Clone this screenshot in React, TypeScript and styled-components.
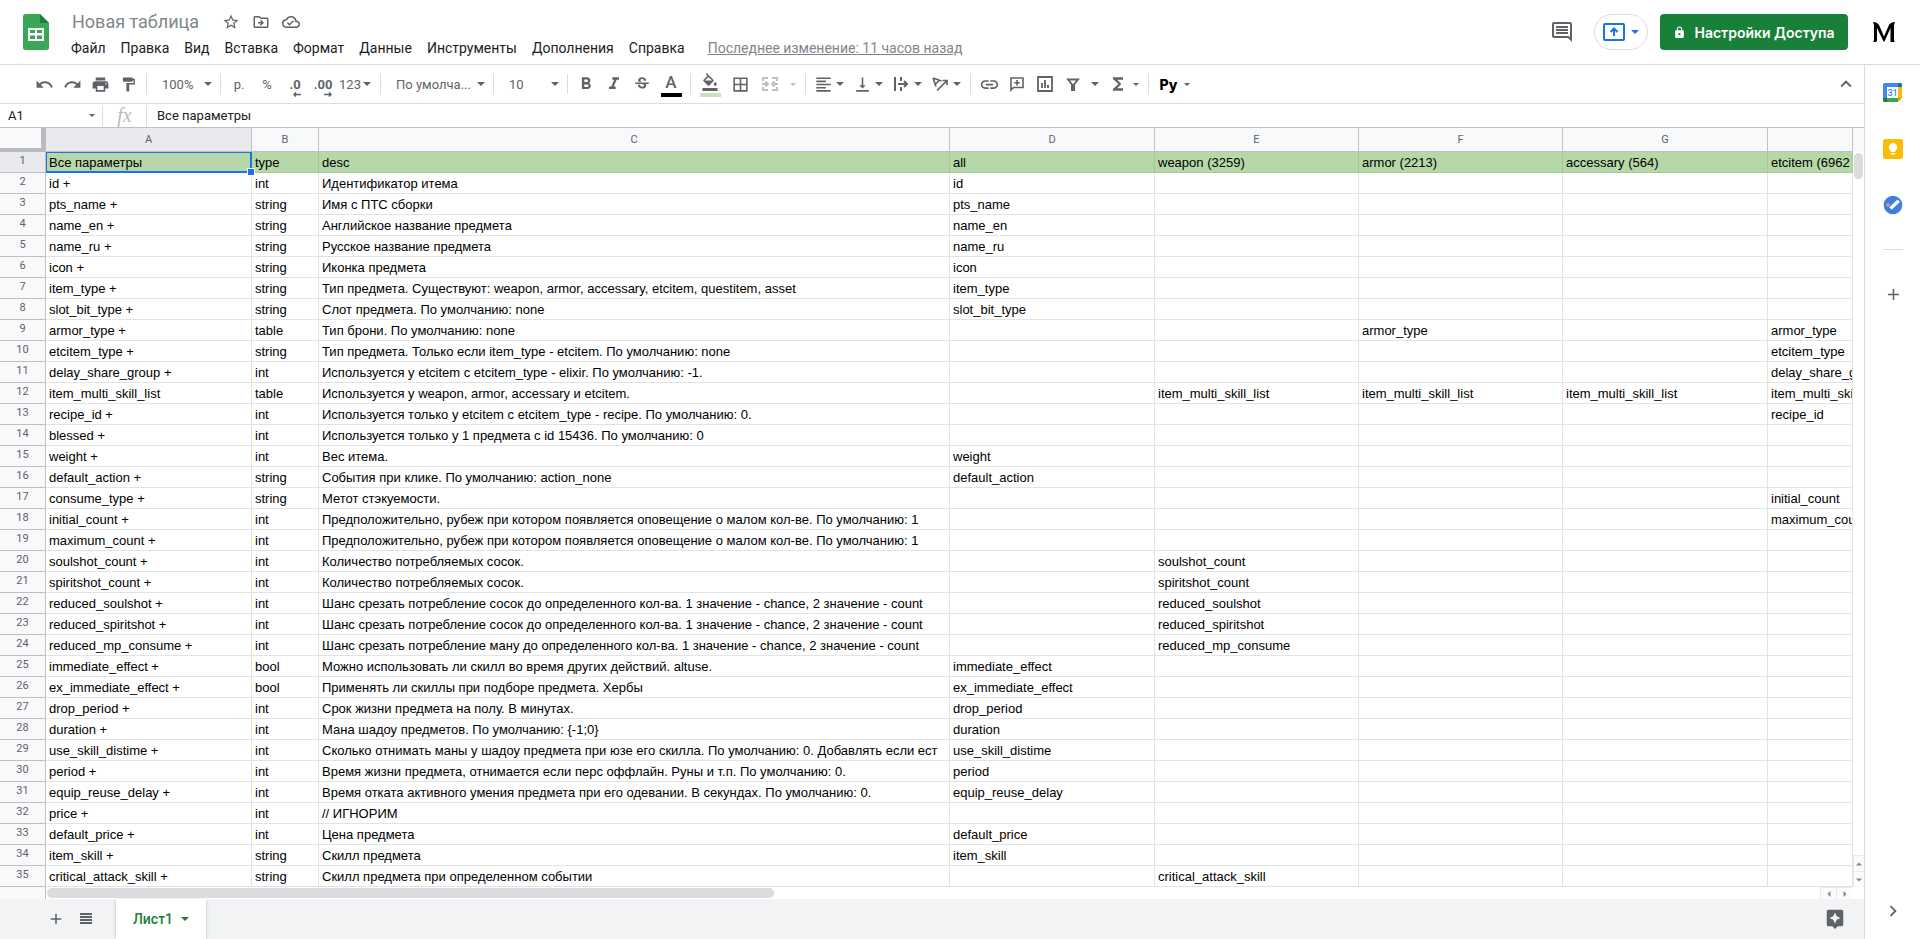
import React from "react";
import styled, { createGlobalStyle } from "styled-components";
import {
  MdAdd,
  MdAssistant,
  MdBorderAll,
  MdChevronRight,
  MdFormatAlignLeft,
  MdFormatBold,
  MdFormatColorFill,
  MdFormatItalic,
  MdFormatPaint,
  MdFunctions,
  MdKeyboardArrowUp,
  MdLink,
  MdLock,
  MdOutlineCloudDone,
  MdOutlineComment,
  MdOutlineDriveFileMove,
  MdPrint,
  MdRedo,
  MdStarBorder,
  MdStrikethroughS,
  MdUndo,
  MdVerticalAlignBottom,
} from "react-icons/md";

const GlobalStyle = createGlobalStyle`
  *, *::before, *::after { box-sizing: border-box; }
  body {
    margin: 0;
    background: #fff;
    color: #202124;
    font-family: Roboto, "Liberation Sans", sans-serif;
  }
  button, input, select { font: inherit; color: inherit; margin: 0; }
`;

const line = "#dadce0";
const iconGrey = "#5f6368";

/* ---------- page ---------- */

const Page = styled.div`
  display: flex;
  flex-direction: column;
  min-height: 100vh;
  overflow: hidden;
`;

const Body = styled.div`
  display: flex;
  flex: 1;
`;

const Main = styled.main`
  display: flex;
  flex-direction: column;
  flex: 1;
  min-width: 0;
`;

const PlainButton = styled.button`
  display: flex;
  align-items: center;
  justify-content: center;
  padding: 0;
  border: 0;
  background: none;
  color: ${iconGrey};
  white-space: nowrap;
  cursor: pointer;
`;

/* ---------- header ---------- */

const Header = styled.header`
  display: flex;
  align-items: flex-start;
  height: 65px;
  padding-left: 23px;
  border-bottom: 1px solid ${line};
`;

const LogoLink = styled.a`
  display: block;
  width: 26px;
  height: 36px;
  margin-top: 14px;
`;

const DocInfo = styled.div`
  padding: 10px 0 0 14px;
`;

const TitleRow = styled.div`
  display: flex;
  align-items: center;
  height: 24px;
  padding-left: 9px;
`;

const TitleInput = styled.input`
  width: 144px;
  padding: 0;
  border: 0;
  outline: 0;
  background: none;
  font-size: 18px;
  line-height: 22px;
  color: #80868b;
`;

const TitleButton = styled(PlainButton)`
  width: 30px;
  height: 24px;
`;

const MenuBar = styled.nav`
  display: flex;
  align-items: center;
  height: 28px;
`;

const MenuItem = styled(PlainButton)`
  height: 24px;
  padding: 0 7px 0 8px;
  font-size: 14px;
  color: #202124;
`;

const LastEdit = styled.a`
  margin-left: 16px;
  font-size: 14px;
  line-height: 24px;
  color: #80868b;
  white-space: nowrap;
`;

const HeaderActions = styled.div`
  display: flex;
  align-items: center;
  height: 36px;
  margin: 14px 24px 0 auto;
`;

const CommentButton = styled(PlainButton)`
  width: 40px;
  height: 36px;
`;

const PresentButton = styled(PlainButton)`
  width: 54px;
  height: 36px;
  gap: 6px;
  margin: 0 12px;
  border: 1px solid ${line};
  border-radius: 18px;
  color: #1a73e8;
`;

const ShareButton = styled(PlainButton)`
  width: 188px;
  height: 36px;
  gap: 8px;
  border-radius: 4px;
  background: #188038;
  color: #fff;
  font-family: Inter, Roboto, sans-serif;
  font-size: 14px;
  font-weight: 600;
`;

const AvatarLink = styled.a`
  display: block;
  width: 24px;
  height: 24px;
  margin-left: 24px;
`;

/* ---------- toolbar ---------- */

const ToolbarRow = styled.div`
  display: flex;
  align-items: center;
  height: 39px;
  padding: 0 5px 0 30px;
  border-bottom: 1px solid ${line};
  font-size: 13px;
  color: ${iconGrey};
`;

const Tool = styled(PlainButton)<{ $w?: number; $split?: boolean; $faded?: boolean }>`
  flex: none;
  width: ${(p) => p.$w ?? 28}px;
  height: 28px;
  padding-right: ${(p) => (p.$split ? 5 : 0)}px;
  color: ${(p) => (p.$faded ? "#bdc1c6" : iconGrey)};
`;

const ToolIcon = styled.span`
  display: flex;
  flex: 1;
  justify-content: center;
`;

const ToolDivider = styled.span`
  flex: none;
  width: 1px;
  height: 20px;
  margin: 0 4px;
  background: ${line};
`;

const SelectBox = styled.label<{ $w: number }>`
  display: flex;
  flex: none;
  align-items: center;
  width: ${(p) => p.$w}px;
  height: 28px;
  padding: 0 4px 0 11px;
`;

const ToolSelect = styled.select`
  flex: 1;
  min-width: 0;
  padding: 0;
  border: 0;
  outline: 0;
  background: none;
  appearance: none;
  color: ${iconGrey};
`;

const UnderBar = styled.span<{ $color: string }>`
  display: flex;
  justify-content: center;
  width: 21px;
  height: 24px;
  border-bottom: 4px solid ${(p) => p.$color};
  margin-top: 2px;
  font-size: 17px;
  line-height: 18px;
  font-weight: 500;
`;

const DecimalLabel = styled.span`
  display: flex;
  flex-direction: column;
  align-items: flex-end;
  padding-top: 6px;
  font-size: 13px;
  font-weight: 700;
  line-height: 14px;
`;

const ScriptLabel = styled.span`
  font-family: Inter, sans-serif;
  font-size: 14px;
  font-weight: 800;
  color: #000;
`;

const CollapseButton = styled(Tool)`
  margin-left: auto;
  margin-right: -1px;
`;

/* ---------- formula bar ---------- */

const FormulaRow = styled.div`
  display: flex;
  align-items: center;
  height: 24px;
  border-bottom: 1px solid #c0c0c0;
  font-size: 13px;
`;

const NameBox = styled.label`
  display: flex;
  align-items: center;
  width: 103px;
  height: 20px;
  padding: 0 7px 0 8px;
  border-right: 1px solid ${line};
  color: ${iconGrey};
`;

const BarInput = styled.input`
  flex: 1;
  min-width: 0;
  padding: 0;
  border: 0;
  outline: 0;
  background: none;
  color: #202124;
`;

const FxLabel = styled.span`
  width: 44px;
  height: 20px;
  border-right: 1px solid ${line};
  font: italic 20px/18px "Liberation Serif", serif;
  color: #b8bbbe;
  text-align: center;
`;

const FormulaLabel = styled.label`
  display: flex;
  flex: 1;
  padding-left: 10px;
`;

/* ---------- sheet ---------- */

const SheetArea = styled.div`
  display: grid;
  grid-template-columns: minmax(0, 1fr) 11px;
  grid-template-rows: auto 12px;
`;

const TableClip = styled.div`
  overflow: hidden;
`;

const Table = styled.table`
  width: 100%;
  table-layout: fixed;
  border-collapse: separate;
  border-spacing: 0;
`;

const Col = styled.col<{ $w?: number }>`
  width: ${(p) => (p.$w ? `${p.$w}px` : "auto")};
`;

const ColHead = styled.th<{ $active?: boolean }>`
  height: 24px;
  padding: 0;
  border-right: 1px solid #c0c0c0;
  border-bottom: 1px solid #c0c0c0;
  background: ${(p) => (p.$active ? "#e8eaed" : "#f8f9fa")};
  font-size: 11px;
  font-weight: 400;
  color: ${iconGrey};
`;

const Corner = styled.td`
  padding: 0;
  border-right: 5px solid #b9bbbd;
  border-bottom: 4px solid #b9bbbd;
  background: #f8f9fa;
`;

const RowHead = styled.th<{ $active?: boolean }>`
  height: 21px;
  padding: 0 0 2px;
  border-right: 1px solid #c0c0c0;
  border-bottom: 1px solid #c0c0c0;
  background: ${(p) => (p.$active ? "#e8eaed" : "#f8f9fa")};
  font-size: 11px;
  line-height: 16px;
  font-weight: 400;
  color: ${iconGrey};
`;

const Cell = styled.td<{ $head?: boolean; $selected?: boolean }>`
  position: relative;
  height: 21px;
  padding: 2px 0 0 3px;
  border-right: 1px solid ${(p) => (p.$head ? "#a9c89c" : "#e2e3e3")};
  border-bottom: 1px solid ${(p) => (p.$head ? "#a9c89c" : "#e2e3e3")};
  background: ${(p) => (p.$head ? "#b6d7a8" : "#fff")};
  font-family: "Liberation Sans", Arial, sans-serif;
  font-size: 13px;
  line-height: 18px;
  color: #000;
  white-space: nowrap;
  overflow: ${(p) => (p.$selected ? "visible" : "hidden")};
  ${(p) => p.$selected && "box-shadow: inset 0 0 0 1px #1a73e8; border-color: #1a73e8; z-index: 1;"}
`;

const FillHandle = styled.span`
  position: absolute;
  right: -4px;
  bottom: -4px;
  width: 8px;
  height: 8px;
  border: 1px solid #fff;
  background: #1a73e8;
`;

const VScroll = styled.div`
  display: flex;
  flex-direction: column;
  padding-top: 25px;
  background: linear-gradient(#f8f9fa 24px, #fff 24px);
`;

const VThumb = styled.div`
  width: 9px;
  height: 26px;
  margin: 0 auto auto 1px;
  border-radius: 5px;
  background: ${line};
`;

const ScrollButton = styled(PlainButton)<{ $w: number; $h: number }>`
  flex: none;
  width: ${(p) => p.$w}px;
  height: ${(p) => p.$h}px;
  border: solid #e8eaed;
  border-width: 1px 0 0 1px;
  background: #fbfbfb;
`;

const HScroll = styled.div`
  display: flex;
  height: 12px;
  grid-column: 1 / 3;
  padding-right: 12px;
`;

const HScrollGutter = styled.div`
  width: 46px;
  border-right: 1px solid #c0c0c0;
  background: #f8f9fa;
`;

const HTrack = styled.div`
  flex: 1;
  padding: 1px 0 1px 1px;
`;

const HThumb = styled.div`
  width: 41%;
  height: 10px;
  border-radius: 5px;
  background: ${line};
`;

/* ---------- sheet tabs ---------- */

const TabsBar = styled.footer`
  display: flex;
  align-items: center;
  flex: 1;
  min-height: 40px;
  padding: 0 14px 0 41px;
  background: #f1f3f4;
`;

const BarButton = styled(PlainButton)`
  width: 30px;
  height: 38px;
`;

const SheetTab = styled(PlainButton)`
  align-self: stretch;
  width: 90px;
  gap: 8px;
  margin-left: 15px;
  background: #fff;
  box-shadow: 0 1px 3px rgba(60, 64, 67, 0.3);
  font-size: 14px;
  font-weight: 500;
  color: #188038;
`;

const ExploreButton = styled(BarButton)`
  margin-left: auto;
`;

/* ---------- side panel ---------- */

const Side = styled.aside`
  display: flex;
  flex-direction: column;
  flex: none;
  width: 56px;
  border-left: 1px solid ${line};
  padding-left: 1px;
`;

const SideButton = styled(PlainButton)<{ $last?: boolean }>`
  height: 56px;
  margin-top: ${(p) => (p.$last ? "auto" : 0)};
`;

const SideDivider = styled.hr`
  width: 20px;
  margin: 16px auto;
  border: 0;
  border-top: 1px solid ${line};
`;

/* ---------- drawings ---------- */

const Arrow = ({ small }: { small?: boolean }) => (
  <svg width={small ? 6 : 8} height={small ? 3 : 4} viewBox="0 0 8 4" fill="currentColor" aria-hidden>
    <path d="M0 0h8L4 4z" />
  </svg>
);

const Pointer = ({ d }: { d: string }) => (
  <svg width="6" height="6" viewBox="0 0 6 6" fill="#80868b" aria-hidden>
    <path d={d} />
  </svg>
);

const SheetsLogo = () => (
  <svg width="26" height="36" viewBox="0 0 26 36" aria-hidden>
    <path fill="#3aa757" d="M2.500 0H17l9 9v24.500a2.500 2.500 0 0 1-2.500 2.500h-21A2.500 2.500 0 0 1 0 33.500v-31A2.500 2.500 0 0 1 2.500 0z" />
    <path fill="#188038" d="M17 0l9 9h-9z" />
    <path fill="#fff" fillRule="evenodd" d="M5 14h16v13H5zM7 16v3h5v-3zM14 16v3h5v-3zM7 21.500v3.500h5v-3.500zM14 21.500v3.500h5v-3.500z" />
  </svg>
);

const PresentIcon = () => (
  <svg width="22" height="18" viewBox="0 0 22 18" fill="none" stroke="currentColor" strokeWidth="2" aria-hidden>
    <rect x="1" y="1" width="20" height="16" rx="1" />
    <path d="M11 13V6M7.500 9L11 5.500 14.500 9" />
  </svg>
);

const Avatar = () => (
  <svg width="24" height="24" viewBox="0 0 24 24" aria-hidden>
    <path d="M1 2c3.500.2 5.500 1.500 6.500 4L12 16.500 16.500 6C17.500 3.500 19.500 2.200 23 2l-1 3v14.500c0 1 .3 2 1 2.500h-4.500V8L12.500 21.500h-1L5 8v11c0 1.500-.3 2.500-1 3H1c.7-.5 1-1.500 1-2.500V5z" />
  </svg>
);

const MergeIcon = () => (
  <svg width="18" height="18" viewBox="0 0 18 18" fill="none" stroke="currentColor" strokeWidth="2" aria-hidden>
    <path d="M7 3H2v3M11 3h5v3M7 15H2v-3M11 15h5v-3M1 9h5M17 9h-5M4.500 6.500L7 9l-2.500 2.500M13.500 6.500L11 9l2.500 2.500" />
  </svg>
);

const WrapIcon = () => (
  <svg width="16" height="16" viewBox="0 0 16 16" fill="none" stroke="currentColor" strokeWidth="2" aria-hidden>
    <path d="M2 1v14M8 1v4M8 11v4M5 8h9M11 5l3 3-3 3" />
  </svg>
);

const RotateIcon = () => (
  <svg width="18" height="16" viewBox="0 0 18 16" fill="none" stroke="currentColor" strokeWidth="1.700" aria-hidden>
    <path d="M2 2l8.500 3M2 2l3 8.500M8.200 4.500L4.500 8M6 14.500L15.500 5M11.500 4.500H16V9" />
  </svg>
);

const AddCommentIcon = () => (
  <svg width="16" height="16" viewBox="0 0 16 16" fill="none" stroke="currentColor" strokeWidth="1.600" aria-hidden>
    <path d="M2 2h12v9.500H4.500L2 14zM8 4v5.500M5.200 6.700h5.600" />
  </svg>
);

const ChartIcon = () => (
  <svg width="16" height="16" viewBox="0 0 16 16" fill="none" stroke="currentColor" strokeWidth="1.800" aria-hidden>
    <path d="M1 1h14v14H1zM5 7v5M8 4v8M11 9v3" />
  </svg>
);

const FilterIcon = () => (
  <svg width="14" height="14" viewBox="0 0 14 14" fill="none" stroke="currentColor" strokeWidth="2" aria-hidden>
    <path d="M2 2.500h10L8 7.500V13H6V7.500z" />
  </svg>
);

const ShortArrow = ({ flip }: { flip?: boolean }) => (
  <svg width="8" height="5" viewBox="0 0 8 5" fill="none" stroke="currentColor" strokeWidth="1.500" aria-hidden>
    <path d={flip ? "M0 2.500h7M5 .5l2 2-2 2" : "M8 2.500H1M3 .5l-2 2 2 2"} />
  </svg>
);

const ListIcon = () => (
  <svg width="12" height="12" viewBox="0 0 12 12" fill="currentColor" aria-hidden>
    <path d="M0 0h12v2H0zM0 3h12v2H0zM0 6h12v2H0zM0 9h12v2H0z" />
  </svg>
);

const CalendarIcon = () => (
  <svg width="20" height="20" viewBox="0 0 20 20" aria-hidden>
    <path fill="#4285f4" d="M2 0h13v4H4v11H0V2a2 2 0 0 1 2-2z" />
    <path fill="#1967d2" d="M15 0h2.500A1.500 1.500 0 0 1 19 1.500V4h-4z" />
    <path fill="#fbbc04" d="M15 4h4v11h-4z" />
    <path fill="#34a853" d="M4 15h11v4H4z" />
    <path fill="#188038" d="M0 15h4v4H1.500A1.500 1.500 0 0 1 0 17.500z" />
    <path fill="#f29900" d="M15 15h4l-4 4z" />
    <path fill="#fff" d="M4 4h11v11H4z" />
    <text x="9.500" y="12.500" fontFamily="Roboto, sans-serif" fontSize="9" fontWeight="500" fill="#4285f4" textAnchor="middle">31</text>
  </svg>
);

const KeepIcon = () => (
  <svg width="20" height="20" viewBox="0 0 20 20" aria-hidden>
    <rect width="20" height="20" rx="2.500" fill="#fbbc04" />
    <path fill="#fff" d="M10 4a4.200 4.200 0 0 0-2.300 7.700V13h4.600v-1.300A4.200 4.200 0 0 0 10 4zM7.800 14h4.400v1.500H7.800z" />
  </svg>
);

const TasksIcon = () => (
  <svg width="20" height="20" viewBox="0 0 20 20" aria-hidden>
    <circle cx="10" cy="10" r="9.300" fill="#3f7de0" />
    <circle cx="5" cy="10" r="1.900" fill="#c9a063" />
    <path d="M7.500 13.500L15.700 5.800" stroke="#fff" strokeWidth="3.400" />
  </svg>
);

/* ---------- data ---------- */

const menus = ["Файл", "Правка", "Вид", "Вставка", "Формат", "Данные", "Инструменты", "Дополнения", "Справка"];

const columns: { name: string; width?: number }[] = [
  { name: "A", width: 206 },
  { name: "B", width: 67 },
  { name: "C", width: 631 },
  { name: "D", width: 205 },
  { name: "E", width: 204 },
  { name: "F", width: 204 },
  { name: "G", width: 205 },
  { name: "" },
];

const multi = "item_multi_skill_list";

const rows: string[][] = [
  ["Все параметры", "type", "desc", "all", "weapon (3259)", "armor (2213)", "accessary (564)", "etcitem (6962"],
  ["id +", "int", "Идентификатор итема", "id"],
  ["pts_name +", "string", "Имя с ПТС сборки", "pts_name"],
  ["name_en +", "string", "Английское название предмета", "name_en"],
  ["name_ru +", "string", "Русское название предмета", "name_ru"],
  ["icon +", "string", "Иконка предмета", "icon"],
  ["item_type +", "string", "Тип предмета. Существуют: weapon, armor, accessary, etcitem, questitem, asset", "item_type"],
  ["slot_bit_type +", "string", "Слот предмета. По умолчанию: none", "slot_bit_type"],
  ["armor_type +", "table", "Тип брони. По умолчанию: none", "", "", "armor_type", "", "armor_type"],
  ["etcitem_type +", "string", "Тип предмета. Только если item_type - etcitem. По умолчанию: none", "", "", "", "", "etcitem_type"],
  ["delay_share_group +", "int", "Используется у etcitem с etcitem_type - elixir. По умолчанию: -1.", "", "", "", "", "delay_share_group"],
  ["item_multi_skill_list", "table", "Используется у weapon, armor, accessary и etcitem.", "", multi, multi, multi, multi],
  ["recipe_id +", "int", "Используется только у etcitem с etcitem_type - recipe. По умолчанию: 0.", "", "", "", "", "recipe_id"],
  ["blessed +", "int", "Используется только у 1 предмета с id 15436. По умолчанию: 0"],
  ["weight +", "int", "Вес итема.", "weight"],
  ["default_action +", "string", "События при клике. По умолчанию: action_none", "default_action"],
  ["consume_type +", "string", "Метот стэкуемости.", "", "", "", "", "initial_count"],
  ["initial_count +", "int", "Предположительно, рубеж при котором появляется оповещение о малом кол-ве. По умолчанию: 1", "", "", "", "", "maximum_count"],
  ["maximum_count +", "int", "Предположительно, рубеж при котором появляется оповещение о малом кол-ве. По умолчанию: 1"],
  ["soulshot_count +", "int", "Количество потребляемых сосок.", "", "soulshot_count"],
  ["spiritshot_count +", "int", "Количество потребляемых сосок.", "", "spiritshot_count"],
  ["reduced_soulshot +", "int", "Шанс срезать потребление сосок до определенного кол-ва. 1 значение - chance, 2 значение - count", "", "reduced_soulshot"],
  ["reduced_spiritshot +", "int", "Шанс срезать потребление сосок до определенного кол-ва. 1 значение - chance, 2 значение - count", "", "reduced_spiritshot"],
  ["reduced_mp_consume +", "int", "Шанс срезать потребление ману до определенного кол-ва. 1 значение - chance, 2 значение - count", "", "reduced_mp_consume"],
  ["immediate_effect +", "bool", "Можно использовать ли скилл во время других действий. altuse.", "immediate_effect"],
  ["ex_immediate_effect +", "bool", "Применять ли скиллы при подборе предмета. Хербы", "ex_immediate_effect"],
  ["drop_period +", "int", "Срок жизни предмета на полу. В минутах.", "drop_period"],
  ["duration +", "int", "Мана шадоу предметов. По умолчанию: {-1;0}", "duration"],
  ["use_skill_distime +", "int", "Сколько отнимать маны у шадоу предмета при юзе его скилла. По умолчанию: 0. Добавлять если ест", "use_skill_distime"],
  ["period +", "int", "Время жизни предмета, отнимается если перс оффлайн. Руны и т.п. По умолчанию: 0.", "period"],
  ["equip_reuse_delay +", "int", "Время отката активного умения предмета при его одевании. В секундах. По умолчанию: 0.", "equip_reuse_delay"],
  ["price +", "int", "// ИГНОРИМ"],
  ["default_price +", "int", "Цена предмета", "default_price"],
  ["item_skill +", "string", "Скилл предмета", "item_skill"],
  ["critical_attack_skill +", "string", "Скилл предмета при определенном событии", "", "critical_attack_skill"],
];

/* ---------- sections ---------- */

const TopHeader = () => (
  <Header>
    <LogoLink href="#home" aria-label="Таблицы">
      <SheetsLogo />
    </LogoLink>
    <DocInfo>
      <TitleRow>
        <TitleInput defaultValue="Новая таблица" aria-label="Название" />
        <TitleButton aria-label="Пометить"><MdStarBorder size={18} /></TitleButton>
        <TitleButton aria-label="Переместить"><MdOutlineDriveFileMove size={18} /></TitleButton>
        <TitleButton aria-label="Статус документа"><MdOutlineCloudDone size={18} /></TitleButton>
      </TitleRow>
      <MenuBar>
        {menus.map((m) => (
          <MenuItem key={m}>{m}</MenuItem>
        ))}
        <LastEdit href="#history">Последнее изменение: 11 часов назад</LastEdit>
      </MenuBar>
    </DocInfo>
    <HeaderActions>
      <CommentButton aria-label="Комментарии"><MdOutlineComment size={24} /></CommentButton>
      <PresentButton aria-label="Начать встречу">
        <PresentIcon />
        <Arrow />
      </PresentButton>
      <ShareButton>
        <MdLock size={13} />
        Настройки Доступа
      </ShareButton>
      <AvatarLink href="#account" aria-label="Аккаунт"><Avatar /></AvatarLink>
    </HeaderActions>
  </Header>
);

const SplitTool = ({ label, children, w = 39 }: { label: string; children: React.ReactNode; w?: number }) => (
  <Tool $w={w} $split aria-label={label}>
    <ToolIcon>{children}</ToolIcon>
    <Arrow />
  </Tool>
);

const Toolbar = () => (
  <ToolbarRow role="toolbar">
    <Tool aria-label="Отменить"><MdUndo size={19} /></Tool>
    <Tool aria-label="Повторить"><MdRedo size={19} /></Tool>
    <Tool aria-label="Печать"><MdPrint size={19} /></Tool>
    <Tool aria-label="Копировать форматирование"><MdFormatPaint size={17} /></Tool>
    <ToolDivider />
    <SelectBox $w={65}>
      <ToolSelect aria-label="Масштаб"><option>100%</option></ToolSelect>
      <Arrow />
    </SelectBox>
    <ToolDivider />
    <Tool>р.</Tool>
    <Tool>%</Tool>
    <Tool aria-label="Уменьшить число знаков"><DecimalLabel>.0<ShortArrow /></DecimalLabel></Tool>
    <Tool aria-label="Увеличить число знаков"><DecimalLabel>.00<ShortArrow flip /></DecimalLabel></Tool>
    <Tool $w={39} $split><ToolIcon>123</ToolIcon><Arrow /></Tool>
    <ToolDivider />
    <SelectBox $w={104}>
      <ToolSelect aria-label="Шрифт"><option>По умолча...</option></ToolSelect>
      <Arrow />
    </SelectBox>
    <ToolDivider />
    <SelectBox $w={65}>
      <ToolSelect aria-label="Размер шрифта"><option>10</option></ToolSelect>
      <Arrow />
    </SelectBox>
    <ToolDivider />
    <Tool aria-label="Полужирный"><MdFormatBold size={20} /></Tool>
    <Tool aria-label="Курсив"><MdFormatItalic size={20} /></Tool>
    <Tool aria-label="Зачеркнутый"><MdStrikethroughS size={18} /></Tool>
    <Tool $w={30} aria-label="Цвет текста"><UnderBar $color="#000">A</UnderBar></Tool>
    <ToolDivider />
    <Tool $w={30} aria-label="Цвет заливки"><UnderBar $color="#c5e3bd"><MdFormatColorFill size={18} /></UnderBar></Tool>
    <Tool $w={30} aria-label="Границы"><MdBorderAll size={19} /></Tool>
    <Tool $w={30} $faded aria-label="Объединить ячейки"><MergeIcon /></Tool>
    <Tool $w={16} $faded aria-label="Параметры объединения"><Arrow small /></Tool>
    <ToolDivider />
    <SplitTool label="Выравнивание по горизонтали"><MdFormatAlignLeft size={19} /></SplitTool>
    <SplitTool label="Выравнивание по вертикали"><MdVerticalAlignBottom size={19} /></SplitTool>
    <SplitTool label="Перенос текста"><WrapIcon /></SplitTool>
    <SplitTool label="Поворот текста"><RotateIcon /></SplitTool>
    <ToolDivider />
    <Tool aria-label="Вставить ссылку"><MdLink size={21} /></Tool>
    <Tool aria-label="Добавить комментарий"><AddCommentIcon /></Tool>
    <Tool aria-label="Вставить диаграмму"><ChartIcon /></Tool>
    <Tool aria-label="Создать фильтр"><FilterIcon /></Tool>
    <Tool $w={16} aria-label="Фильтры"><Arrow /></Tool>
    <Tool $w={41} $split aria-label="Функции"><ToolIcon><MdFunctions size={20} /></ToolIcon><Arrow small /></Tool>
    <ToolDivider />
    <Tool $w={42} $split aria-label="Способы ввода"><ToolIcon><ScriptLabel>Py</ScriptLabel></ToolIcon><Arrow small /></Tool>
    <CollapseButton aria-label="Скрыть меню"><MdKeyboardArrowUp size={22} /></CollapseButton>
  </ToolbarRow>
);

const FormulaBar = () => (
  <FormulaRow>
    <NameBox>
      <BarInput defaultValue="A1" aria-label="Имя" />
      <Arrow small />
    </NameBox>
    <FxLabel>fx</FxLabel>
    <FormulaLabel>
      <BarInput defaultValue="Все параметры" aria-label="Формула" />
    </FormulaLabel>
  </FormulaRow>
);

const Sheet = () => (
  <SheetArea>
    <TableClip>
      <Table>
        <colgroup>
          <Col $w={46} />
          {columns.map((c, i) => (
            <Col key={i} $w={c.width} />
          ))}
        </colgroup>
        <thead>
          <tr>
            <Corner />
            {columns.map((c, i) => (
              <ColHead key={i} scope="col" $active={i === 0}>{c.name}</ColHead>
            ))}
          </tr>
        </thead>
        <tbody>
          {rows.map((row, r) => (
            <tr key={r}>
              <RowHead scope="row" $active={r === 0}>{r + 1}</RowHead>
              {columns.map((_, c) => {
                const selected = r === 0 && c === 0;
                return (
                  <Cell key={c} $head={r === 0} $selected={selected}>
                    {row[c]}
                    {selected && <FillHandle />}
                  </Cell>
                );
              })}
            </tr>
          ))}
        </tbody>
      </Table>
    </TableClip>
    <VScroll>
      <VThumb />
      <ScrollButton $w={11} $h={16} aria-label="Вверх"><Pointer d="M0 4.500h6l-3-3z" /></ScrollButton>
      <ScrollButton $w={11} $h={16} aria-label="Вниз"><Pointer d="M0 1.500h6l-3 3z" /></ScrollButton>
    </VScroll>
    <HScroll>
      <HScrollGutter />
      <HTrack><HThumb /></HTrack>
      <ScrollButton $w={16} $h={12} aria-label="Влево"><Pointer d="M4.500 0v6l-3-3z" /></ScrollButton>
      <ScrollButton $w={16} $h={12} aria-label="Вправо"><Pointer d="M1.500 0v6l3-3z" /></ScrollButton>
    </HScroll>
  </SheetArea>
);

export default function App() {
  return (
    <Page>
      <GlobalStyle />
      <TopHeader />
      <Body>
        <Main>
          <Toolbar />
          <FormulaBar />
          <Sheet />
          <TabsBar>
            <BarButton aria-label="Добавить лист"><MdAdd size={18} /></BarButton>
            <BarButton aria-label="Все листы"><ListIcon /></BarButton>
            <SheetTab>
              Лист1
              <Arrow />
            </SheetTab>
            <ExploreButton aria-label="Анализ данных"><MdAssistant size={22} /></ExploreButton>
          </TabsBar>
        </Main>
        <Side>
          <SideButton aria-label="Календарь"><CalendarIcon /></SideButton>
          <SideButton aria-label="Keep"><KeepIcon /></SideButton>
          <SideButton aria-label="Задачи"><TasksIcon /></SideButton>
          <SideDivider />
          <SideButton aria-label="Установить дополнения"><MdAdd size={19} /></SideButton>
          <SideButton $last aria-label="Скрыть боковую панель"><MdChevronRight size={22} /></SideButton>
        </Side>
      </Body>
    </Page>
  );
}
